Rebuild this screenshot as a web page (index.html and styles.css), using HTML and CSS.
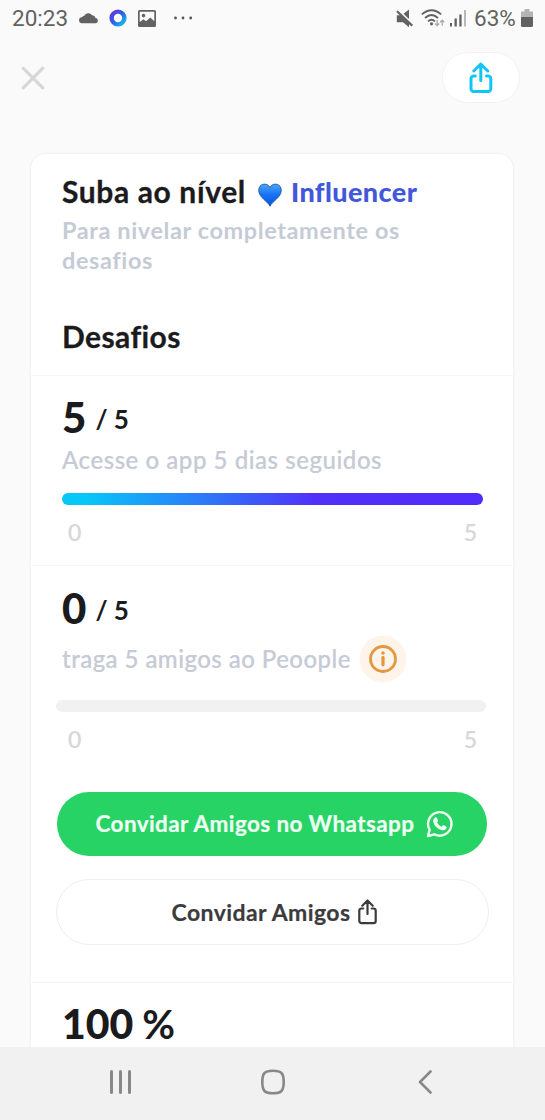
FILE: index.html
```html
<!DOCTYPE html>
<html lang="pt">
<head>
<meta charset="utf-8">
<title>Desafios</title>
<link rel="stylesheet" href="styles.css">
</head>
<body>
<div class="screen">
  <div class="status">
    <span class="clock">20:23</span>
    <svg class="cloud" width="20" height="12" viewBox="0 0 20 12"><path d="M3.200 11.200a3 3 0 0 1-.3-6A4.600 4.600 0 0 1 5.300 3.800 4.300 4.300 0 0 1 13 3.300a3.500 3.500 0 0 1 3.400 2.800A2.600 2.600 0 0 1 17 11.200Z" fill="#626262"/></svg>
    <svg class="ring" width="18" height="18" viewBox="0 0 18 18"><defs><linearGradient id="rg" x1="0" y1="0" x2="1" y2="1"><stop offset=".1" stop-color="#5b3fe0"/><stop offset=".5" stop-color="#2864ea"/><stop offset=".9" stop-color="#16b0ea"/></linearGradient></defs><circle cx="9" cy="9" r="6.400" fill="#fff" stroke="url(#rg)" stroke-width="4.400"/></svg>
    <svg class="photo" width="18" height="17" viewBox="0 0 18 17"><path fill="#626262" fill-rule="evenodd" d="M1.500 0h15A1.500 1.500 0 0 1 18 1.500v14a1.500 1.500 0 0 1-1.500 1.500h-15A1.500 1.500 0 0 1 0 15.500v-14A1.500 1.500 0 0 1 1.500 0ZM1.700 1.700V12l3.800-2.700 2.500 2 4.300-3.800 4 3.800V1.700ZM5.500 3.800a1.800 1.800 0 1 1 0 3.600 1.800 1.800 0 0 1 0-3.600Z"/></svg>
    <svg class="more" width="20" height="4" viewBox="0 0 20 4"><g fill="#555"><circle cx="2.500" cy="2" r="1.400"/><circle cx="10" cy="2" r="1.400"/><circle cx="17.700" cy="2" r="1.400"/></g></svg>
    <span class="grow"></span>
    <svg class="mute" width="18" height="19" viewBox="0 0 18 19"><path fill="#626262" d="M.8 6.200h4l8.200 8v4L7 13.300H.8ZM7.500 4.800 13 .5v9.500Z"/><path d="M1 2.200 16.200 16.600" stroke="#626262" stroke-width="2.200"/></svg>
    <svg class="wifi" width="25" height="19" viewBox="0 0 25 19"><g fill="none" stroke="#626262" stroke-width="1.900"><path d="M.8 5.400Q10.500-3 20.200 5.400M4 9Q10.500 3.200 17 9M7 12.400Q10.500 9.300 14 12.400"/></g><circle cx="10.500" cy="14.800" r="1.600" fill="#626262"/><g fill="none" stroke="#aaa" stroke-width="1.300"><path d="M16.200 11v5.500M14.200 14.500l2 2 2-2M21.200 16.700v-5.500M19.200 13.200l2-2 2 2"/></g></svg>
    <svg class="signal" width="17" height="18" viewBox="0 0 17 18"><g fill="#626262"><rect x="0" y="14" width="2" height="3.500"/><rect x="4.500" y="9.500" width="2.300" height="8"/><rect x="9.300" y="5.500" width="2.300" height="12"/></g><rect x="14" y="1" width="2" height="16.500" fill="#b9b9b9"/></svg>
    <span class="percent">63%</span>
    <svg class="battery" width="12" height="18" viewBox="0 0 12 18"><path d="M3.500 0h5v2.500H12V9H0V2.500h3.500Z" fill="#b4b4b4"/><path d="M0 8h12v8.500a1.500 1.500 0 0 1-1.500 1.500h-9A1.500 1.500 0 0 1 0 16.500Z" fill="#626262"/></svg>
  </div>
  <div class="topbar">
    <svg width="24" height="24" viewBox="0 0 24 24"><path d="M2.200 2.200l19.600 19.600M21.800 2.200 2.200 21.800" stroke="#d7d7d7" stroke-width="3.200" stroke-linecap="round"/></svg>
    <div class="share"><svg width="24" height="32" viewBox="0 0 24 32"><g fill="none" stroke="#12c5f2" stroke-width="3" stroke-linecap="round" stroke-linejoin="round"><path d="M11.800 18.500V3M4.800 9l7-7 7 7M6.300 14H4.700a2.700 2.700 0 0 0-2.700 2.700v10.100a2.700 2.700 0 0 0 2.700 2.700h14.400a2.700 2.700 0 0 0 2.700-2.700V16.700a2.700 2.700 0 0 0-2.700-2.700h-1.600"/></g></svg></div>
  </div>
  <main class="card">
    <section class="intro">
      <h1><span class="lead">Suba ao nível</span><svg class="heart" width="24" height="24" viewBox="0 0 24 24"><defs><linearGradient id="hg" x1="0" y1="0" x2="0" y2="1"><stop offset="0" stop-color="#4aa6f6"/><stop offset=".45" stop-color="#1c75f3"/><stop offset="1" stop-color="#0753dc"/></linearGradient></defs><path d="M12 23.300C9.500 18 .7 14.500.7 7.300.7.500 9-1 12 4.300 15-1 23.300.5 23.300 7.300 23.300 14.500 14.500 18 12 23.300Z" fill="url(#hg)" stroke="#17559f" stroke-width=".8"/></svg><span class="level">Influencer</span></h1>
      <p class="sub">Para nivelar completamente os<br>desafios</p>
      <h2>Desafios</h2>
    </section>
    <section class="task first">
      <div class="count"><b>5</b><span>/ 5</span></div>
      <p class="desc d1">Acesse o app 5 dias seguidos</p>
      <div class="bar full"></div>
      <div class="range"><span>0</span><span>5</span></div>
    </section>
    <section class="task second">
      <div class="count"><b>0</b><span>/ 5</span></div>
      <div class="row"><p class="desc d2">traga 5 amigos ao Peoople</p>
        <svg width="48" height="48" viewBox="0 0 48 48"><circle cx="24" cy="24" r="23.500" fill="#fff4e9"/><circle cx="24" cy="24" r="12.500" fill="none" stroke="#e59740" stroke-width="2.800"/><circle cx="24" cy="18" r="1.800" fill="#e59740"/><path d="M24 22.300v7.500" stroke="#e59740" stroke-width="3.200" stroke-linecap="round"/></svg>
      </div>
      <div class="bar empty"></div>
      <div class="range"><span>0</span><span>5</span></div>
      <button class="btn whats"><span>Convidar Amigos no Whatsapp</span><svg width="28" height="28" viewBox="0 0 28 28"><path d="M2 26 3.600 19.700A11.700 11.700 0 1 1 8.400 24.300Z" fill="none" stroke="#effff4" stroke-width="2.400" stroke-linejoin="round"/><path d="M8.900 7.500C9.500 7 10.600 7 11 7.900l1 2.300c.3.700-.1 1.200-.9 2.100.9 2.200 2.500 3.600 4.500 4.400.8-1 1.300-1.700 2-1.400l2.500 1.200c.6.300.6.900.3 1.800-.6 1.600-2.600 2.300-4.300 2-4.400-.9-8.500-5.200-8.900-8.800-.1-1.500.6-3.100 1.700-4Z" fill="#effff4"/></svg></button>
      <button class="btn invite"><span>Convidar Amigos</span><svg width="19" height="26" viewBox="0 0 19 26"><g fill="none" stroke="#3b3b3e" stroke-width="2.200" stroke-linecap="round" stroke-linejoin="round"><path d="M9.500 15V2M4.300 6.700l5.200-5.200 5.200 5.200M5.300 9.500H3.500a2.200 2.200 0 0 0-2.200 2.200v10.200a2.200 2.200 0 0 0 2.200 2.200h12a2.200 2.200 0 0 0 2.200-2.200V11.700a2.200 2.200 0 0 0-2.200-2.200h-1.800"/></g></svg></button>
    </section>
    <section class="task third"><div class="count"><b>100</b><em>%</em></div></section>
  </main>
  <nav class="nav">
    <svg width="24" height="24" viewBox="0 0 24 24"><path d="M2.500 1.500v21M11.500 1.500v21M20.500 1.500v21" stroke="#888" stroke-width="3" stroke-linecap="round"/></svg>
    <svg width="26" height="26" viewBox="0 0 26 26"><path d="M13 1.800c8.300 0 10.700 2.200 10.700 11.200S21.300 24.200 13 24.200 2.300 22 2.300 13 4.700 1.800 13 1.800Z" fill="none" stroke="#888" stroke-width="2.600"/></svg>
    <svg width="14" height="24" viewBox="0 0 14 24"><path d="M12.500 1.500 2 12l10.500 10.500" fill="none" stroke="#888" stroke-width="2.600" stroke-linecap="round" stroke-linejoin="round"/></svg>
  </nav>
</div>
</body>
</html>
```
FILE: styles.css
```css
* { box-sizing: border-box; margin: 0; padding: 0; }
body { font-family: Lato, "Liberation Sans", sans-serif; background: #fafafa; font-variant-ligatures: none; }
svg { display: block; flex: none; }
.screen { width: 545px; height: 1120px; display: flex; flex-direction: column; overflow: hidden; }
.status { height: 36px; flex: none; display: flex; align-items: center; padding: 0 12px; font: 22.5px/38px Roboto, sans-serif; color: #626262; }
.clock { width: 67px; }
.cloud { margin-right: 10px; }
.ring { margin-right: 11px; }
.photo { margin-right: 17px; }
.grow { flex: 1; }
.mute { margin-right: 7px; }
.wifi { margin-right: 4px; }
.signal { margin-right: 7px; }
.percent { width: 47px; white-space: nowrap; }
.topbar { height: 117px; flex: none; display: flex; justify-content: space-between; align-items: flex-start; padding: 16px 25px 0 21px; }
.topbar > svg { margin-top: 14px; }
.share { width: 78px; height: 51px; border: 1px solid #f2f2f2; border-radius: 26px; background: #fff; display: flex; justify-content: center; align-items: center; }
.card { flex: 1; min-height: 0; overflow: hidden; margin: 0 31px 0 30px; background: #fff; border: 1px solid #f3f3f3; border-bottom: 0; border-radius: 16px 16px 0 0; box-shadow: 0 0 2px #f4f4f4; }
.intro { height: 221px; padding: 22px 30px 0 31px; color: #1b1b1d; }
h1 { display: flex; align-items: center; height: 30px; font-size: 30px; line-height: 30px; letter-spacing: .62px; white-space: nowrap; }
.lead { width: 196px; -webkit-text-stroke: .3px #1b1b1d; }
.heart { margin: 7px 9px 0 0; }
.level { color: #4257da; font-size: 27px; font-weight: 900; letter-spacing: .4px; padding-top: 2px; }
.sub { margin-top: 10px; color: #c5cbd5; font-size: 23.5px; font-weight: 700; line-height: 29.5px; letter-spacing: .6px; white-space: nowrap; }
h2 { margin-top: 46px; font-size: 30px; line-height: 30px; letter-spacing: .4px; -webkit-text-stroke: .3px #1b1b1d; }
.task { padding: 21px 30px 0 31px; border-top: 1px solid #f6f6f6; }
.first { height: 190px; }
.second { height: 417px; padding-top: 22px; }
.count { height: 40px; display: flex; align-items: center; line-height: 40px; color: #1b1b1d; }
.count b { font-size: 42px; font-weight: 900; }
.count span { font-size: 26px; font-weight: 700; margin-left: 9px; padding-top: 3px; }
.third .count b { font-size: 41px; }
.count em { font-size: 40px; font-style: normal; font-weight: 700; margin-left: 9px; }
.desc { color: #c5cad5; font-size: 24px; font-weight: 500; line-height: 30px; letter-spacing: .55px; white-space: nowrap; -webkit-text-stroke: .2px #c5cad5; }
.d1 { margin-top: 8px; }
.d2 { letter-spacing: .45px; }
.bar { height: 12px; border-radius: 6px; }
.full { margin-top: 18px; background: linear-gradient(90deg, #06c8f8 5%, #5130fa 60%, #522bfa); }
.empty { margin: 17px -3px 0 -6px; background: #f1f1f1; }
.range { display: flex; justify-content: space-between; margin-top: 12px; padding: 0 6px; color: #d7d7da; font-size: 23px; font-weight: 500; line-height: 30px; -webkit-text-stroke: .2px #d7d7da; }
.row { display: flex; align-items: center; height: 48px; margin-top: 7px; }
.row svg { margin-left: 8px; }
.btn { display: flex; justify-content: center; align-items: center; font: 700 22.5px/30px Lato, sans-serif; letter-spacing: .4px; border: 0; white-space: nowrap; -webkit-text-stroke: .2px currentColor; }
.whats { width: 430px; height: 64px; margin: 38px 0 0 -5px; border-radius: 32px; background: #28d366; color: #effff4; gap: 12px; padding-left: 6px; }
.invite { width: 433px; height: 66px; margin: 23px 0 0 -6px; border-radius: 33px; border: 1px solid #eee; background: #fff; color: #3b3b3e; gap: 8px; font-size: 23px; letter-spacing: .4px; padding-left: 4px; }
.nav { height: 73px; flex: none; background: #f1f1f1; display: grid; grid-template-columns: 152px 152px 152px; justify-content: center; justify-items: center; align-items: center; padding-bottom: 3px; }
```
